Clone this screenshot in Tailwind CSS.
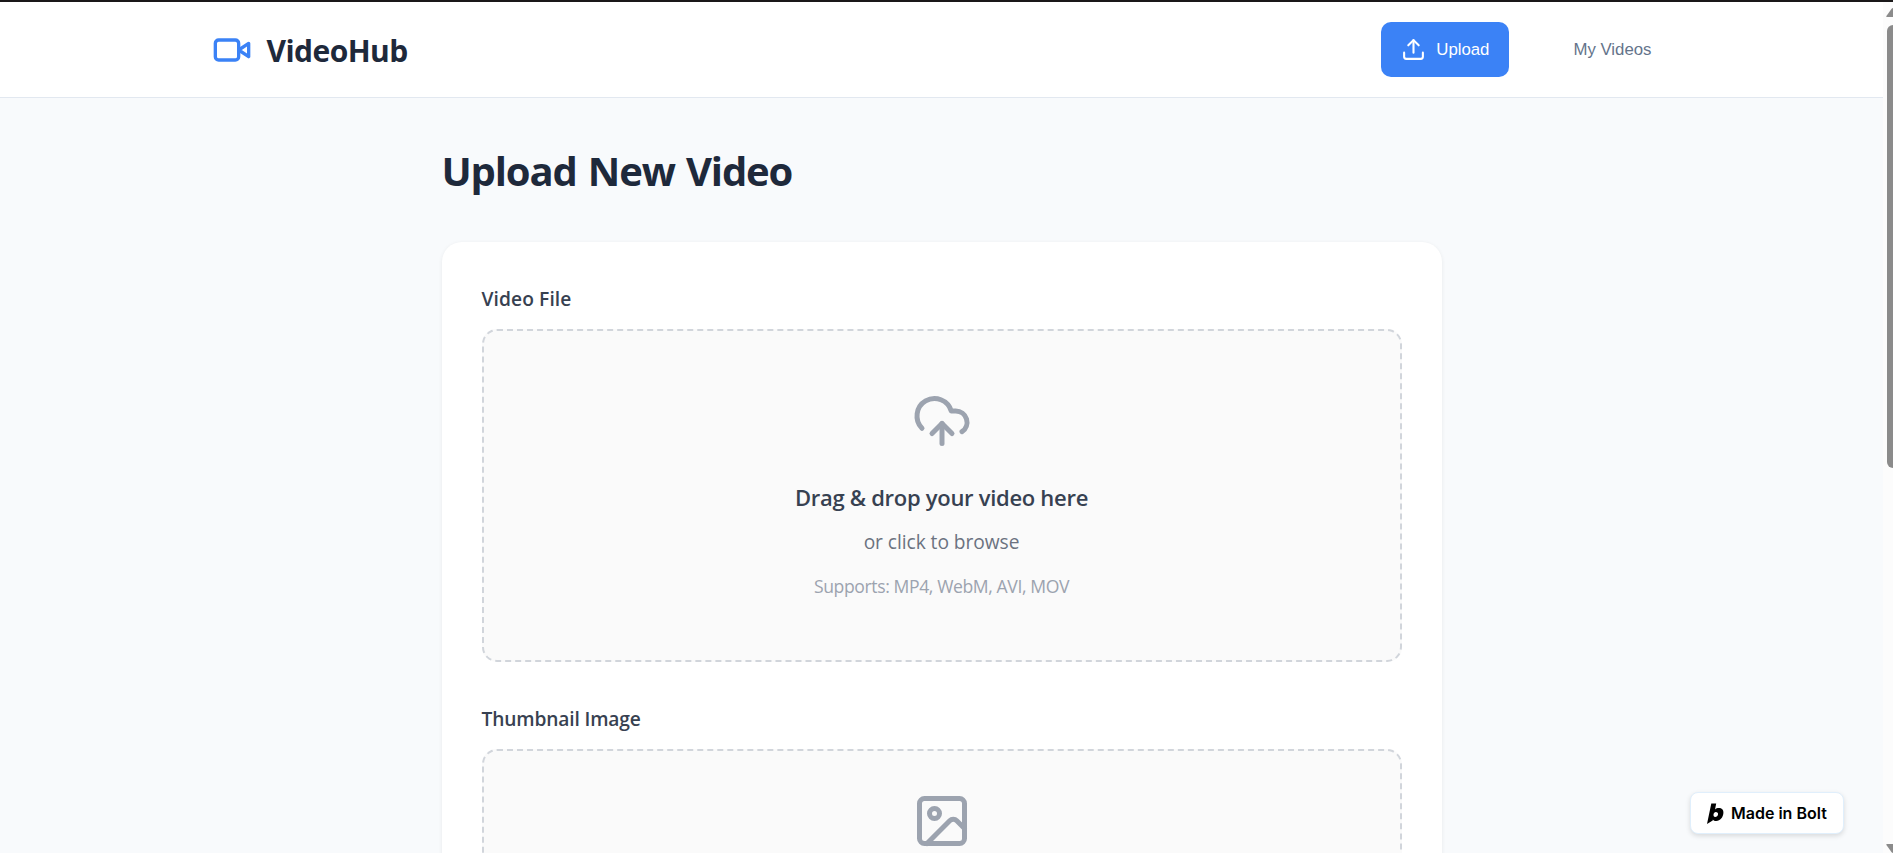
<!DOCTYPE html>
<html lang="en">
<head>
<meta charset="utf-8">
<title>VideoHub</title>
<script src="https://cdn.jsdelivr.net/npm/@tailwindcss/browser@4"></script>
</head>
<body class="relative flex h-[853px] overflow-hidden border-t-2 border-[#1a1819] bg-[#f8fafc] font-['Open_Sans',sans-serif]">
<div class="flex h-full w-[1883px] flex-col overflow-hidden">
  <header class="h-24 shrink-0 border-b border-[#e2e8f0] bg-white">
    <div class="mx-auto flex h-[95px] w-[1500px] items-center justify-between px-5">
      <div class="flex items-center gap-[15px] text-[30px] font-bold tracking-[-0.55px] text-[#1e293b]">
        <svg class="size-10 text-[#3b82f6]" viewBox="0 0 24 24" fill="none" stroke="currentColor" stroke-width="2" stroke-linecap="round" stroke-linejoin="round"><path d="m22 8-6 4 6 4V8Z"/><rect x="2" y="6" width="14" height="12" rx="2"/></svg>
        <span class="pt-[3px] leading-10">VideoHub</span>
      </div>
      <nav class="flex items-center gap-16 font-['Liberation_Sans',sans-serif] text-[16.8px]">
        <a class="flex h-[55px] items-center gap-2.5 rounded-[10px] bg-[#3b82f6] px-5 text-white">
          <svg class="size-[25px]" viewBox="0 0 24 24" fill="none" stroke="currentColor" stroke-width="2" stroke-linecap="round" stroke-linejoin="round"><path d="M21 15v4a2 2 0 0 1-2 2H5a2 2 0 0 1-2-2v-4"/><path d="m17 8-5-5-5 5"/><path d="M12 3v12"/></svg>
          Upload
        </a>
        <a class="pr-5 text-[#64748b]">My Videos</a>
      </nav>
    </div>
  </header>
  <main class="mx-auto w-[1000px] pt-[43px]">
    <h1 class="mb-[41px] text-[40px] leading-[60px] font-bold tracking-[-1.15px] text-[#1e293b] [word-spacing:2px]">Upload New Video</h1>
    <section class="rounded-[20px] bg-white p-10 shadow-[0_1px_4px_rgba(0,0,0,0.07)]">
      <h2 class="mb-3.5 pt-px text-[19.2px] leading-8 font-semibold tracking-[0.1px] text-[#374151]">Video File</h2>
      <div class="mb-10 flex h-[333px] flex-col items-center rounded-[15px] border-2 border-dashed border-[#d1d5db] bg-[#fafafa] pt-[60px]">
        <svg class="size-[60px] text-[#9ca3af]" viewBox="0 0 24 24" fill="none" stroke="currentColor" stroke-width="2" stroke-linecap="round" stroke-linejoin="round"><path d="M4 14.899A7 7 0 1 1 15.71 8h1.79a4.5 4.5 0 0 1 2.5 8.242"/><path d="M12 13v8"/><path d="m8 17 4-4 4 4"/></svg>
        <p class="mt-[29px] text-[22px] leading-[35px] font-semibold tracking-[-0.29px] text-[#374151]">Drag &amp; drop your video here</p>
        <p class="mt-3 text-[19.2px] leading-[30px] tracking-[-0.06px] text-[#6b7280]">or click to browse</p>
        <p class="mt-[15px] text-[17.6px] leading-7 tracking-[-0.4px] text-[#9ca3af]">Supports: MP4, WebM, AVI, MOV</p>
      </div>
      <h2 class="mb-3.5 pt-px text-[19.2px] leading-8 font-semibold tracking-[-0.15px] text-[#374151]">Thumbnail Image</h2>
      <div class="flex h-[293px] flex-col items-center rounded-[15px] border-2 border-dashed border-[#d1d5db] bg-[#fafafa] pt-10">
        <svg class="size-[60px] text-[#9ca3af]" viewBox="0 0 24 24" fill="none" stroke="currentColor" stroke-width="2" stroke-linecap="round" stroke-linejoin="round"><rect x="3" y="3" width="18" height="18" rx="2"/><circle cx="9" cy="9" r="2"/><path d="m21 15-3.086-3.086a2 2 0 0 0-2.828 0L6 21"/></svg>
      </div>
    </section>
  </main>
</div>
<!-- Scrollbar -->
<div class="flex h-full w-2.5 shrink-0 flex-col overflow-hidden bg-[#fcfcfc]">
  <svg class="mt-1.5 ml-[3px] h-[9px] w-[14px] shrink-0" viewBox="0 0 14 9" fill="#8b8b8b"><path d="M1 9Q0 9 .4 8L5.4 1Q7-.8 8.6 1L13.6 8Q14 9 13 9Z"/></svg>
  <div class="mt-2 ml-1 h-[443px] w-3 shrink-0 rounded-l-[6px] bg-[#8b8b8b]"></div>
  <svg class="mt-auto mb-0 ml-[3px] h-[9px] w-[14px] shrink-0" viewBox="0 0 14 9" fill="#8b8b8b"><path d="M1 0Q0 0 .4 1L5.4 8Q7 9.8 8.6 8L13.6 1Q14 0 13 0Z"/></svg>
</div>
<a class="absolute right-[49px] bottom-[19px] flex h-[42px] w-[154px] items-center gap-[7px] rounded-lg border border-[#e0effc] bg-white pl-4 font-['Inter',sans-serif] text-base font-semibold whitespace-nowrap text-black shadow-[0_2px_5px_rgba(0,0,0,0.13)]">
  <svg class="h-[21px] w-[17px]" viewBox="0 0 17 21" fill="black" fill-rule="evenodd"><path d="M4.3.5H9.2L8 6.4C9.1 5.5 10.3 5.1 11.8 5.1C14.8 5.1 16.6 7 16.4 10C16.1 14.2 13.2 18 9.2 18C7.7 18 6.6 17.5 5.9 16.5L5.7 17.6L0 21ZM8.8 9.1C7.7 9.1 6.7 10.2 6.5 11.5C6.3 12.9 7 13.9 8.2 13.9C9.6 13.9 10.8 12.8 11 11.4C11.2 10 10.4 9.1 8.8 9.1Z"/></svg>
  <span>Made in Bolt</span>
</a>
</body>
</html>
